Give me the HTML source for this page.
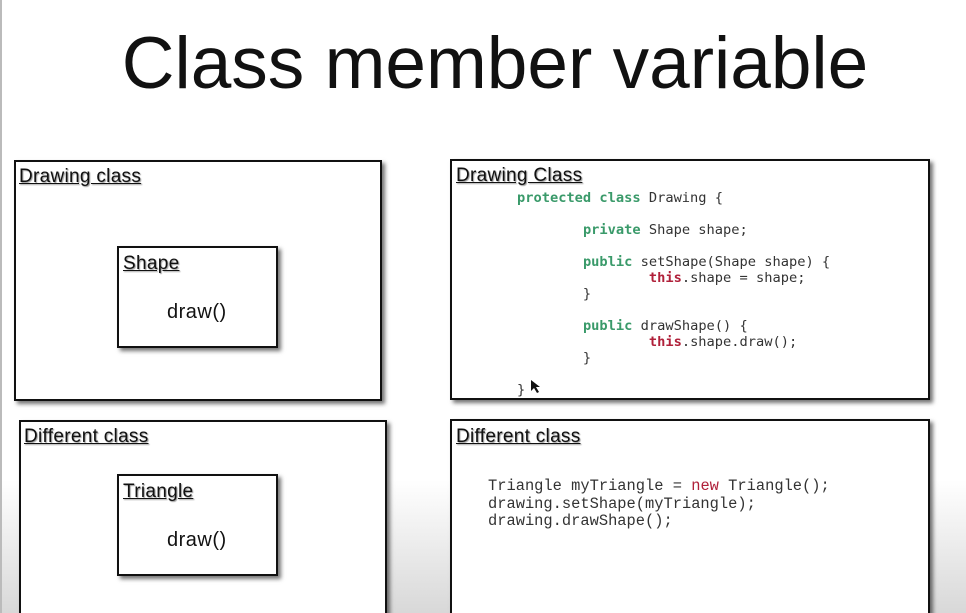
<!DOCTYPE html>
<html style="overflow:hidden"><head><meta charset="utf-8"><style>
html,body{margin:0;width:966px;height:613px;overflow:hidden}
body{background:#fff;font-family:"Liberation Sans",sans-serif;position:relative}
.bg{position:absolute;left:0;top:0;width:966px;height:613px;background:linear-gradient(#fff 0,#fff 480px,#d8d8d8 613px)}
.edge{position:absolute;left:0;top:0;width:2px;height:613px;background:#bbb}
h1{position:absolute;left:0;width:990px;text-align:center;top:22px;margin:0;font-weight:normal;font-size:73px;color:#111}
.box{position:absolute;background:#fff;border:2px solid #111;box-shadow:3px 3px 4px rgba(0,0,0,.55)}
.hd{position:absolute;font-size:19px;text-decoration:underline;color:#111;text-shadow:1px 1px 1px #999;letter-spacing:.3px}
.in{position:absolute;font-size:20px;color:#111;letter-spacing:.5px}
pre{position:absolute;margin:0;font-family:"DejaVu Sans Mono",monospace;font-size:13.7px;line-height:16px;color:#333}
.g{color:#3a9a6a;font-weight:bold}.r{color:#b0203a;font-weight:bold}
pre.b{font-family:"Liberation Mono",monospace;font-size:15.4px;line-height:17.5px;color:#333}
</style></head><body>
<div class="bg"></div><div class="edge"></div>
<h1>Class member variable</h1>

<div class="box" style="left:14px;top:160px;width:364px;height:237px"></div>
<div class="hd" style="left:19px;top:166px">Drawing class</div>
<div class="box" style="left:117px;top:246px;width:157px;height:98px"></div>
<div class="hd" style="left:123px;top:253px">Shape</div>
<div class="in" style="left:167px;top:301px">draw()</div>

<div class="box" style="left:450px;top:159px;width:476px;height:237px"></div>
<div class="hd" style="left:456px;top:165px">Drawing Class</div>
<pre style="left:517px;top:190px"><span class="g">protected class</span> Drawing {

        <span class="g">private</span> Shape shape;

        <span class="g">public</span> setShape(Shape shape) {
                <span class="r">this</span>.shape = shape;
        }

        <span class="g">public</span> drawShape() {
                <span class="r">this</span>.shape.draw();
        }

}</pre>
<svg style="position:absolute;left:530px;top:379px" width="12" height="16"><path d="M1 1 L1 12 L4 9 L7 14 L9 13 L6 8 L10 8 Z" fill="#111"/></svg>

<div class="box" style="left:19px;top:420px;width:364px;height:200px"></div>
<div class="hd" style="left:24px;top:426px">Different class</div>
<div class="box" style="left:117px;top:474px;width:157px;height:98px"></div>
<div class="hd" style="left:123px;top:481px">Triangle</div>
<div class="in" style="left:167px;top:529px">draw()</div>

<div class="box" style="left:450px;top:419px;width:476px;height:200px"></div>
<div class="hd" style="left:456px;top:426px">Different class</div>
<pre class="b" style="left:488px;top:478px">Triangle myTriangle = <span class="r" style="font-weight:normal">new</span> Triangle();
drawing.setShape(myTriangle);
drawing.drawShape();</pre>
</body></html>
